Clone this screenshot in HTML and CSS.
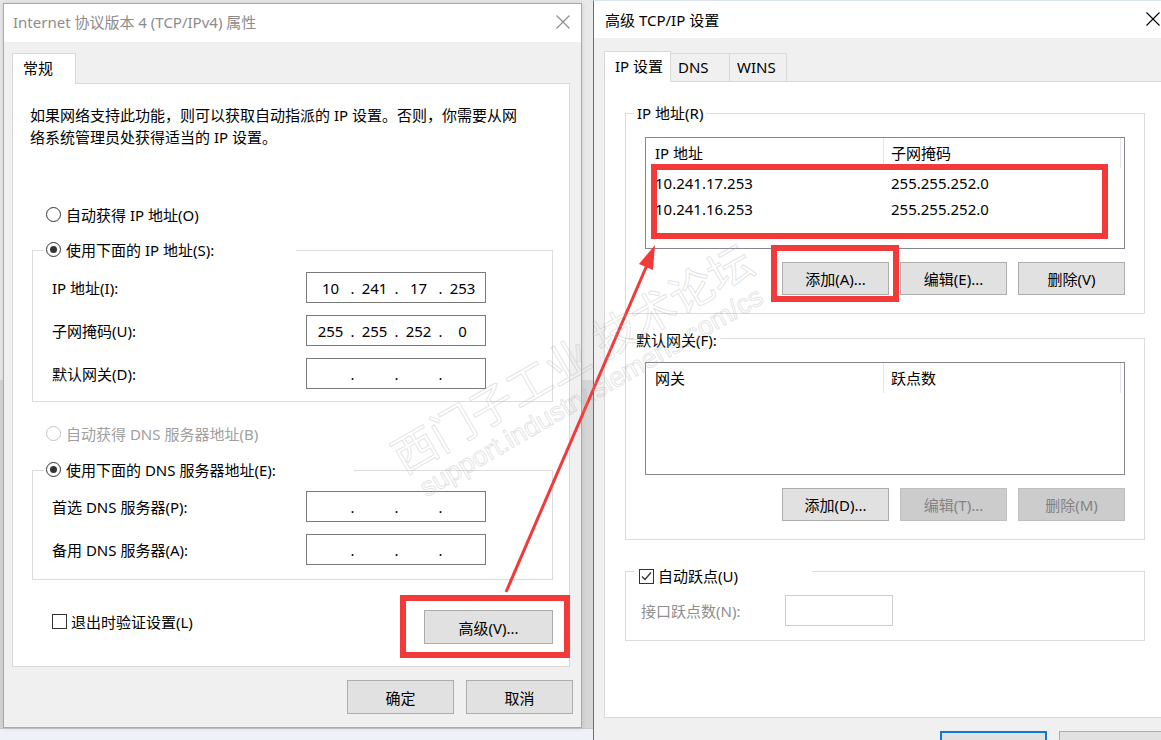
FILE: index.html
```html
<!doctype html>
<html lang="zh-CN">
<head>
    <meta charset="UTF-8">
    <meta name="viewport" content="width=device-width, initial-scale=1.0">
    <title>TCP/IPv4 属性</title>
    <link rel="stylesheet" href="styles.css">
</head>
<body>
<div class="desktop">
    <div class="backwin"></div>

    <!-- left: ipv4 properties -->
    <div class="dialog dialog-left">
        <div class="titlebar">
            <span class="title">Internet 协议版本 4 (TCP/IPv4) 属性</span>
            <svg class="close" width="14" height="14" viewBox="0 0 14 14"><path d="M0.5 0.5L13.5 13.5M13.5 0.5L0.5 13.5"/></svg>
        </div>
        <div class="tabs">
            <div class="tab active tab-general">常规</div>
        </div>
        <div class="panel panel-left">
            <p class="intro">如果网络支持此功能，则可以获取自动指派的 IP 设置。否则，你需要从网<br>络系统管理员处获得适当的 IP 设置。</p>

            <div class="option opt-auto-ip"><span class="radio"></span>自动获得 IP 地址(O)</div>
            <div class="group group-ip">
                <div class="legend legend-ip"><span class="radio on"></span>使用下面的 IP 地址(S):</div>
                <div class="field">
                    <span class="label">IP 地址(I):</span>
                    <div class="ipbox"><span>10</span><i>.</i><span>241</span><i>.</i><span>17</span><i>.</i><span>253</span></div>
                </div>
                <div class="field">
                    <span class="label">子网掩码(U):</span>
                    <div class="ipbox"><span>255</span><i>.</i><span>255</span><i>.</i><span>252</span><i>.</i><span>0</span></div>
                </div>
                <div class="field field-last">
                    <span class="label">默认网关(D):</span>
                    <div class="ipbox"><span></span><i>.</i><span></span><i>.</i><span></span><i>.</i><span></span></div>
                </div>
            </div>

            <div class="option opt-auto-dns disabled"><span class="radio"></span>自动获得 DNS 服务器地址(B)</div>
            <div class="group group-dns">
                <div class="legend legend-dns"><span class="radio on"></span>使用下面的 DNS 服务器地址(E):</div>
                <div class="field field-dns1">
                    <span class="label">首选 DNS 服务器(P):</span>
                    <div class="ipbox"><span></span><i>.</i><span></span><i>.</i><span></span><i>.</i><span></span></div>
                </div>
                <div class="field">
                    <span class="label">备用 DNS 服务器(A):</span>
                    <div class="ipbox"><span></span><i>.</i><span></span><i>.</i><span></span><i>.</i><span></span></div>
                </div>
            </div>

            <div class="panel-bottom">
                <label class="checkline"><span class="check"></span>退出时验证设置(L)</label>
                <button class="btn btn-advanced">高级(V)...</button>
            </div>
        </div>
        <div class="footer footer-left">
            <button class="btn">确定</button>
            <button class="btn">取消</button>
        </div>
    </div>

    <!-- right: advanced tcp/ip -->
    <div class="dialog dialog-right">
        <div class="titlebar titlebar-active">
            <span class="title">高级 TCP/IP 设置</span>
            <svg class="close" width="14" height="14" viewBox="0 0 14 14"><path d="M0.5 0.5L13.5 13.5M13.5 0.5L0.5 13.5"/></svg>
        </div>
        <div class="tabs tabs-right">
            <div class="tab active tab-ip">IP 设置</div>
            <div class="tab tab-dns">DNS</div>
            <div class="tab tab-wins">WINS</div>
        </div>
        <div class="panel panel-right">
            <div class="rgroup rgroup-ip">
                <div class="rlegend">IP 地址(R)</div>
                <div class="listbox list-ip">
                    <div class="lrow lhead"><span class="c1">IP 地址</span><span class="c2">子网掩码</span></div>
                    <div class="lrow first"><span class="c1">10.241.17.253</span><span class="c2">255.255.252.0</span></div>
                    <div class="lrow"><span class="c1">10.241.16.253</span><span class="c2">255.255.252.0</span></div>
                </div>
                <div class="btnrow">
                    <button class="btn btn-sm">添加(A)...</button>
                    <button class="btn btn-sm">编辑(E)...</button>
                    <button class="btn btn-sm">删除(V)</button>
                </div>
            </div>

            <div class="rgroup rgroup-gw">
                <div class="rlegend legend-gw">默认网关(F):</div>
                <div class="listbox list-gw">
                    <div class="lrow lhead"><span class="c1">网关</span><span class="c2">跃点数</span></div>
                </div>
                <div class="btnrow">
                    <button class="btn btn-sm">添加(D)...</button>
                    <button class="btn btn-sm off">编辑(T)...</button>
                    <button class="btn btn-sm off">删除(M)</button>
                </div>
            </div>

            <div class="rgroup rgroup-metric">
                <div class="rlegend legend-metric"><span class="check on"><svg width="13" height="13" viewBox="0 0 13 13"><path d="M2 6.5L5 9.5L11 2.5"/></svg></span>自动跃点(U)</div>
                <div class="metric">
                    <span class="mlabel">接口跃点数(N):</span>
                    <span class="minput"></span>
                </div>
            </div>
        </div>
        <div class="footer footer-right">
            <button class="btn btn-default"></button>
            <button class="btn"></button>
        </div>
    </div>

    <!-- annotations -->
    <div class="mark mark-adv"></div>
    <div class="mark mark-list"></div>
    <div class="mark mark-add"></div>
    <svg class="arrow" width="1161" height="740" viewBox="0 0 1161 740">
        <line x1="506" y1="592" x2="647" y2="265" stroke="#f23a3a" stroke-width="3"/>
        <polygon points="655,245 653,270 639,264" fill="#f23a3a"/>
    </svg>

    <div class="watermark">
        <div class="wm1">西门子工业 技术论坛</div>
        <div class="wm2">support.industry.siemens.com/cs</div>
    </div>
</div>
</body>
</html>
```

FILE: styles.css
```css
html, body {
    width: 100%;
    height: 100%;
    margin: 0;
    padding: 0;
    overflow: hidden;
}

body {
    font-family: "Noto Sans", "Noto Sans CJK SC", sans-serif;
    font-size: 15px;
    color: #000;
    background: #eef1f7;
}

* {
    box-sizing: border-box;
}

.desktop {
    position: relative;
    width: 1161px;
    height: 740px;
    overflow: hidden;
}

.backwin {
    position: absolute;
    left: -20px;
    top: 0;
    width: 625px;
    height: 729px;
    background: linear-gradient(#e9e9e9 0, #e9e9e9 380px, #d6d6d6 380px);
    border-bottom: 1px solid #c9c9c9;
}

/* windows */
.dialog {
    position: absolute;
    background: #f0f0f0;
}

.dialog-left {
    left: 3px;
    top: 3px;
    width: 579px;
    height: 725px;
    border: 1px solid #a9a9a9;
    box-shadow: 0 0 5px rgba(0, 0, 0, .12);
}

.dialog-right {
    left: 593px;
    top: 0;
    width: 583px;
    height: 760px;
    border-left: 1px solid #2b7cd3;
    border-top: 1px solid #dbe4ef;
}

.titlebar {
    height: 38px;
    background: #fff;
    display: flex;
    align-items: center;
    justify-content: space-between;
    padding: 0 11px 3px 9px;
}

.titlebar .title {
    color: #8c8c8c;
    white-space: nowrap;
}

.titlebar .close {
    stroke: #8c8c8c;
    stroke-width: 1.1;
}

.titlebar-active {
    height: 37px;
    padding: 0 16px 1px 11px;
}

.titlebar-active .title {
    color: #000;
}

.titlebar-active .close {
    stroke: #000;
}

/* tabs */
.tabs {
    display: flex;
    align-items: flex-end;
    margin: 11px 0 0 8px;
}

.tab {
    height: 28px;
    line-height: 26px;
    border: 1px solid #d9d9d9;
    border-bottom: none;
    background: #f0f0f0;
    white-space: nowrap;
}

.tab.active {
    height: 31px;
    line-height: 29px;
    background: #fff;
    margin-bottom: -1px;
    position: relative;
    z-index: 1;
}

.tab-general {
    width: 64px;
    padding-left: 10px;
}

.tabs-right {
    margin: 13px 0 0 10px;
}

.tab-ip {
    width: 67px;
    padding-left: 10px;
    line-height: 27px;
}

.tab-dns {
    width: 59px;
    padding-left: 7px;
    border-left: none;
}

.tab-wins {
    width: 57px;
    padding-left: 7px;
    border-left: none;
}

.panel {
    background: #fff;
    border: 1px solid #d9d9d9;
}

/* left panel */
.panel-left {
    height: 584px;
    margin: 0 11px 0 8px;
    padding-top: 20px;
}

.intro {
    margin: 0 0 0 17px;
    line-height: 22px;
    white-space: nowrap;
}

.option {
    height: 22px;
    display: flex;
    align-items: center;
    padding-left: 33px;
    white-space: nowrap;
}

.opt-auto-ip {
    margin-top: 55px;
}

.opt-auto-dns {
    margin-top: 20px;
}

.disabled {
    color: #a0a0a0;
}

.radio {
    width: 15px;
    height: 15px;
    border: 1px solid #333;
    border-radius: 50%;
    display: inline-flex;
    align-items: center;
    justify-content: center;
    margin-right: 5px;
    background: #fff;
    flex: none;
}

.disabled .radio {
    border-color: #c4c4c4;
}

.radio.on::after {
    content: "";
    width: 7px;
    height: 7px;
    border-radius: 50%;
    background: #333;
}

.group {
    border: 1px solid #dcdcdc;
    margin: 26px 16px 0 19px;
    padding-bottom: 12px;
}

.group-ip {
    margin-top: 25px;
}

.group-dns {
    padding-bottom: 14px;
}

.legend {
    height: 22px;
    margin: -13px 0 0 11px;
    padding-left: 2px;
    background: #fff;
    display: flex;
    align-items: center;
    white-space: nowrap;
}

.legend-ip {
    width: 252px;
}

.legend-dns {
    width: 310px;
}

.field {
    display: flex;
    align-items: center;
    margin-top: 12px;
    padding-left: 19px;
}

.field-dns1 {
    margin-top: 11px;
}

.field .label {
    width: 254px;
    white-space: nowrap;
}

.ipbox {
    width: 180px;
    height: 31px;
    border: 1px solid #7a7a7a;
    display: flex;
    align-items: center;
    padding-left: 5px;
}

.ipbox span {
    width: 37px;
    text-align: center;
}

.ipbox i {
    width: 7px;
    font-style: normal;
    text-align: center;
}

.panel-bottom {
    height: 34px;
    margin-top: 30px;
    display: flex;
    align-items: center;
    justify-content: space-between;
    padding: 0 16px 0 39px;
}

.checkline {
    display: flex;
    align-items: center;
    white-space: nowrap;
}

.panel-bottom .checkline {
    align-self: flex-start;
    height: 22px;
}

.check {
    width: 15px;
    height: 15px;
    border: 1px solid #333;
    background: #fff;
    margin-right: 4px;
    display: inline-flex;
    align-items: center;
    justify-content: center;
    flex: none;
}

.check svg {
    fill: none;
    stroke: #333;
    stroke-width: 1.3;
}

/* buttons */
.btn {
    height: 34px;
    width: 107px;
    border: 1px solid #adadad;
    background: #e1e1e1;
    font: inherit;
    color: #000;
    padding: 0;
    white-space: nowrap;
}

.btn-advanced {
    width: 129px;
}

.btn-sm {
    height: 33px;
}

.btn.off {
    background: #cccccc;
    border-color: #bfbfbf;
    color: #838383;
}

.btn-default {
    border: 2px solid #0f78d4;
}

.footer {
    display: flex;
    justify-content: flex-end;
    gap: 12px;
    padding: 13px 8px 0 0;
}

.footer-right {
    padding: 13px 10px 0 0;
}

/* right panel */
.panel-right {
    width: 561px;
    height: 637px;
    margin-left: 10px;
    padding-top: 31px;
}

.rgroup {
    width: 520px;
    margin-left: 20px;
    border: 1px solid #dcdcdc;
    padding-bottom: 18px;
}

.rgroup-gw {
    margin-top: 24px;
}

.rgroup-metric {
    margin-top: 31px;
    padding-bottom: 14px;
}

.rlegend {
    width: max-content;
    height: 22px;
    line-height: 22px;
    margin: -12px 0 0 8px;
    padding: 0 3px;
    background: #fff;
    white-space: nowrap;
}

.legend-gw {
    margin-top: -10px;
    padding-left: 2px;
}

.legend-metric {
    width: 178px;
    margin-top: -7px;
    padding-left: 5px;
    display: flex;
    align-items: center;
}

.listbox {
    width: 480px;
    margin: 13px 0 0 19px;
    border: 1px solid #828790;
    background: #fff;
}

.list-ip {
    height: 112px;
}

.list-gw {
    height: 113px;
    margin-top: 11px;
}

.lrow {
    display: flex;
    height: 26px;
    line-height: 26px;
    white-space: nowrap;
}

.lrow.first {
    margin-top: 2px;
}

.lrow .c1 {
    width: 238px;
    padding-left: 9px;
}

.lrow .c2 {
    width: 237px;
    padding-left: 7px;
}

.lhead {
    height: 30px;
    line-height: 30px;
}

.lhead .c1,
.lhead .c2 {
    border-right: 1px solid #e5e5e5;
}

.btnrow {
    display: flex;
    justify-content: flex-end;
    gap: 11px;
    margin-top: 13px;
    padding-right: 19px;
}

.metric {
    display: flex;
    align-items: center;
    margin-top: 8px;
    padding-left: 15px;
}

.mlabel {
    width: 144px;
    color: #8f8f8f;
    white-space: nowrap;
}

.minput {
    width: 108px;
    height: 31px;
    border: 1px solid #cccccc;
}

/* annotations */
.mark {
    position: absolute;
    border: 6px solid #f23a3a;
}

.mark-adv {
    left: 400px;
    top: 595px;
    width: 170px;
    height: 63px;
}

.mark-list {
    left: 651px;
    top: 164px;
    width: 457px;
    height: 75px;
}

.mark-add {
    left: 771px;
    top: 245px;
    width: 128px;
    height: 57px;
}

.arrow {
    position: absolute;
    left: 0;
    top: 0;
    pointer-events: none;
}

.watermark {
    position: absolute;
    left: 384px;
    top: 440px;
    transform-origin: 0 0;
    transform: rotate(-30deg);
    pointer-events: none;
    white-space: nowrap;
    color: transparent;
    -webkit-text-stroke: 1px rgba(175, 175, 175, .35);
}

.wm1 {
    font-size: 44px;
    line-height: 46px;
    letter-spacing: 0;
}

.wm2 {
    font-family: "Liberation Sans", sans-serif;
    font-size: 27px;
    line-height: 32px;
    margin-left: 8px;
}
```
